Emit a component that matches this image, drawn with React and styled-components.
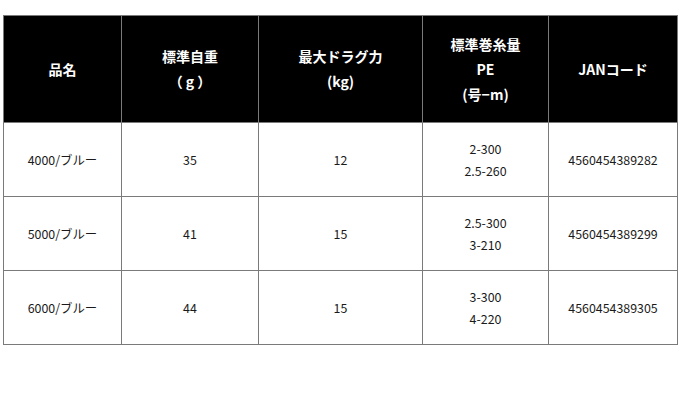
import styled, { createGlobalStyle } from "styled-components";

const GlobalStyle = createGlobalStyle`
  html, body {
    margin: 0;
    padding: 0;
    background: #fff;
  }
  body {
    font-family: "Noto Sans CJK JP", "Noto Sans", sans-serif;
  }
`;

const Page = styled.div`
  padding: 15px 0 0 3px;
`;

const SpecTable = styled.table`
  border-collapse: collapse;
  width: 674px;
  table-layout: fixed;
  border: 1px solid #7a7a7a;
`;

const HeadRow = styled.tr`
  height: 107px;
  background: #000;
`;

const HeadCell = styled.th`
  border: 1px solid #7a7a7a;
  border-top: none;
  color: #fff;
  font-size: 14px;
  font-weight: 700;
  line-height: 25px;
  text-align: center;
  vertical-align: middle;
  padding: 0;
`;

const BodyRow = styled.tr`
  height: 74px;
`;

const Cell = styled.td`
  border: 1px solid #7a7a7a;
  color: #1a1a1a;
  font-size: 12.4px;
  line-height: 22px;
  text-align: center;
  vertical-align: middle;
  padding: 0;
`;

const Col = styled.col`
  width: ${(p) => p.w}px;
`;

const columns = [
  { w: 118, label: ["品名"] },
  { w: 137, label: ["標準自重", "（ g ）"] },
  { w: 164, label: ["最大ドラグ力", "(kg)"] },
  { w: 126, label: ["標準巻糸量", "PE", "(号−m)"] },
  { w: 129, label: ["JANコード"] },
];

const rows = [
  ["4000/ブルー", "35", "12", ["2-300", "2.5-260"], "4560454389282"],
  ["5000/ブルー", "41", "15", ["2.5-300", "3-210"], "4560454389299"],
  ["6000/ブルー", "44", "15", ["3-300", "4-220"], "4560454389305"],
];

const Lines = ({ items }) =>
  items.map((t, i) => (
    <span key={i}>
      {t}
      {i < items.length - 1 && <br />}
    </span>
  ));

export default function App() {
  return (
    <Page>
      <GlobalStyle />
      <SpecTable>
        <colgroup>
          {columns.map((c, i) => (
            <Col key={i} w={c.w} />
          ))}
        </colgroup>
        <thead>
          <HeadRow>
            {columns.map((c, i) => (
              <HeadCell key={i}>
                <Lines items={c.label} />
              </HeadCell>
            ))}
          </HeadRow>
        </thead>
        <tbody>
          {rows.map((r, i) => (
            <BodyRow key={i}>
              {r.map((v, j) => (
                <Cell key={j}>
                  {Array.isArray(v) ? <Lines items={v} /> : v}
                </Cell>
              ))}
            </BodyRow>
          ))}
        </tbody>
      </SpecTable>
    </Page>
  );
}
